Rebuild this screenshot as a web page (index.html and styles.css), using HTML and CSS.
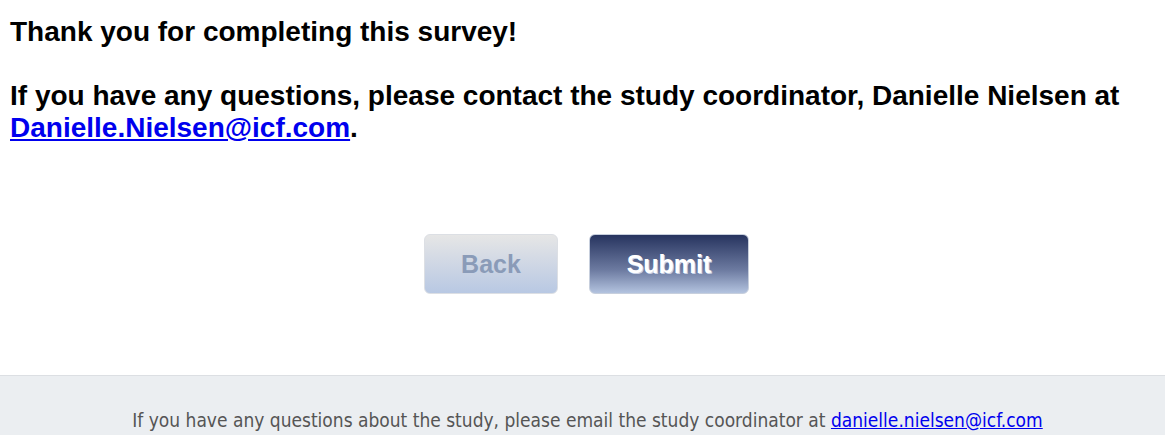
FILE: index.html
```html
<!DOCTYPE html>
<html lang="en">
<head>
    <meta charset="UTF-8">
    <meta name="viewport" content="width=device-width, initial-scale=1.0">
    <title>Survey Complete</title>
    <link rel="stylesheet" href="styles.css">
</head>
<body>
    <div class="content">
        <p class="thanks">
            Thank you for completing this survey!<br><br>
            If you have any questions, please contact the study coordinator, Danielle Nielsen at
            <a href="mailto:Danielle.Nielsen@icf.com">Danielle.Nielsen@icf.com</a>.
        </p>
    </div>
    <div class="nav-buttons">
        <button type="button" class="btn btn-back" disabled>Back</button>
        <button type="submit" class="btn btn-submit">Submit</button>
    </div>
    <footer class="footer">
        If you have any questions about the study, please email the study coordinator at
        <a href="mailto:danielle.nielsen@icf.com">danielle.nielsen@icf.com</a>
    </footer>
</body>
</html>
```

FILE: styles.css
```css
body {
    margin: 0;
    font-family: "Liberation Sans", Arial, sans-serif;
    background: #ffffff;
}
.content {
    padding: 16px 10px 0 10px;
    min-height: 218px;
}
.thanks {
    margin: 0;
    font-size: 28px;
    font-weight: bold;
    line-height: 32px;
    color: #000000;
}
.thanks a {
    color: #0000ee;
}
.nav-buttons {
    display: flex;
    justify-content: center;
    gap: 31px;
    padding-left: 8px;
    height: 141px;
}
.btn {
    height: 60px;
    border-radius: 6px;
    font-family: "Liberation Sans", Arial, sans-serif;
    font-size: 25px;
    font-weight: bold;
    padding: 0;
    cursor: pointer;
}
.btn-back {
    width: 134px;
    color: #8a9bb8;
    border: 1px solid #dcdfe4;
    background: linear-gradient(to bottom, #e6e6e6, #b8c8e3);
}
.btn-submit {
    width: 160px;
    color: #ffffff;
    border: 1px solid #c7cfdd;
    background: linear-gradient(to bottom, #27345f, #6c7aa0 60%, #b3c3df);
    text-shadow: 1px 1px 0 #c9d2e6;
}
.footer {
    border-top: 1px solid #dcdfe3;
    background: #ebeef1;
    color: #555555;
    font-family: "DejaVu Sans Condensed", Tahoma, sans-serif;
    font-size: 19px;
    text-align: center;
    padding: 33px 0 30px 10px;
}
.footer a {
    color: #0000ee;
}
```
